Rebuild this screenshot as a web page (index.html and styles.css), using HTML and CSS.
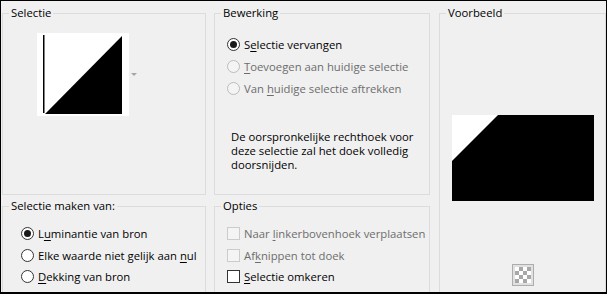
FILE: index.html
```html
<!DOCTYPE html>
<html lang="nl">
<head>
    <meta charset="UTF-8">
    <meta name="viewport" content="width=device-width, initial-scale=1.0">
    <title>Selectie uit masker</title>
    <link rel="stylesheet" href="styles.css">
</head>
<body>
    <div class="dialog">
        <fieldset class="group">
            <legend>Selectie</legend>
            <div class="thumb-row">
                <svg class="thumb" width="92" height="83" viewBox="0 0 92 83">
                    <rect width="92" height="83" fill="#fff"/>
                    <rect x="6" y="2" width="1.5" height="78" fill="#000"/>
                    <polygon points="8,81 85,3 85,81" fill="#000"/>
                </svg>
                <span class="drop-arrow"></span>
            </div>
        </fieldset>

        <fieldset class="group">
            <legend>Bewerking</legend>
            <div class="options options-edit">
                <div class="option"><span class="radio checked"></span><span>S<u>e</u>lectie vervangen</span></div>
                <div class="option disabled"><span class="radio"></span><span><u>T</u>oevoegen aan huidige selectie</span></div>
                <div class="option disabled"><span class="radio"></span><span>Van <u>h</u>uidige selectie aftrekken</span></div>
            </div>
            <p class="note">De oorspronkelijke rechthoek voor<br>deze selectie zal het doek volledig<br>doorsnijden.</p>
        </fieldset>

        <fieldset class="group group-preview">
            <legend>Voorbeeld</legend>
            <svg class="preview" width="142" height="86" viewBox="0 0 142 86">
                <rect width="142" height="86" fill="#000"/>
                <polygon points="0,0 46,0 0,46" fill="#fff"/>
            </svg>
            <button class="checker-btn" type="button"><span class="checker"></span></button>
        </fieldset>

        <fieldset class="group">
            <legend>Selectie maken van:</legend>
            <div class="options options-source">
                <div class="option"><span class="radio checked"></span><span>L<u>u</u>minantie van bron</span></div>
                <div class="option"><span class="radio"></span><span>Elke waarde niet gelijk aan <u>n</u>ul</span></div>
                <div class="option"><span class="radio"></span><span><u>D</u>ekking van bron</span></div>
            </div>
        </fieldset>

        <fieldset class="group">
            <legend>Opties</legend>
            <div class="options options-extra">
                <div class="option disabled"><span class="check"></span><span>Naar <u>l</u>inkerbovenhoek verplaatsen</span></div>
                <div class="option disabled"><span class="check"></span><span>Af<u>k</u>nippen tot doek</span></div>
                <div class="option"><span class="check"></span><span><u>S</u>electie omkeren</span></div>
            </div>
        </fieldset>
    </div>
</body>
</html>
```

FILE: styles.css
```css
body {
    margin: 0;
    font-family: "Open Sans", "Noto Sans", sans-serif;
    font-size: 11.3px;
    color: #000;
}
.dialog {
    box-sizing: border-box;
    width: 607px;
    height: 294px;
    border: 1px solid #000;
    border-bottom-width: 2px;
    background: #f0f0f0;
    overflow: hidden;
    display: grid;
    grid-template-columns: 204px 216px 168px;
    grid-template-rows: 189px 100px;
    column-gap: 8px;
    row-gap: 4px;
    padding: 5px 0 0 1px;
}
.group {
    margin: 0;
    padding: 0;
    min-width: 0;
    border: 1px solid #dcdcdc;
}
.group legend {
    margin-left: 6px;
    padding: 0 2px;
    line-height: 14px;
}
.group-preview {
    grid-column: 3;
    grid-row: 1 / 3;
    margin-left: 1px;
    height: 293px;
    display: flex;
    flex-direction: column;
    align-items: center;
}
.thumb-row {
    display: flex;
    align-items: center;
    margin: 13px 0 0 34px;
}
.thumb {
    display: block;
}
.drop-arrow {
    margin-left: 2px;
    border-left: 3px solid transparent;
    border-right: 3px solid transparent;
    border-top: 3px solid #a6a6a6;
}
.options-edit {
    padding: 13px 0 0 12px;
}
.options-source {
    padding: 10px 0 0 18px;
}
.options-extra {
    padding: 10px 0 0 12px;
}
.option {
    display: flex;
    align-items: center;
    gap: 4px;
    height: 22px;
    white-space: nowrap;
}
.options-source .option,
.options-extra .option {
    height: 21.5px;
}
.option u {
    text-underline-offset: 2px;
}
.disabled {
    color: #6d6d6d;
}
.radio {
    box-sizing: border-box;
    width: 13px;
    height: 13px;
    border: 1px solid #333;
    border-radius: 50%;
    background: #fff;
    display: inline-flex;
    align-items: center;
    justify-content: center;
    flex-shrink: 0;
}
.radio.checked::after {
    content: "";
    width: 7px;
    height: 7px;
    border-radius: 50%;
    background: #1a1a1a;
}
.disabled .radio {
    border-color: #bcbcbc;
    background: #f4f4f4;
}
.check {
    box-sizing: border-box;
    width: 13px;
    height: 13px;
    border: 1px solid #333;
    background: #fff;
    flex-shrink: 0;
}
.disabled .check {
    border-color: #cccccc;
    background: #f4f4f4;
}
.note {
    margin: 31px 0 0 16px;
    line-height: 14px;
}
.preview {
    display: block;
    margin-top: 95px;
}
.checker-btn {
    box-sizing: border-box;
    width: 22px;
    height: 22px;
    margin-top: 63px;
    padding: 0;
    border: 1px solid #adadad;
    background: #e1e1e1;
    display: flex;
    align-items: center;
    justify-content: center;
}
.checker {
    width: 16px;
    height: 16px;
    background-color: #fff;
    background-image:
        linear-gradient(45deg, #a8a8a8 25%, transparent 25%, transparent 75%, #a8a8a8 75%),
        linear-gradient(45deg, #a8a8a8 25%, transparent 25%, transparent 75%, #a8a8a8 75%);
    background-size: 8px 8px;
    background-position: 0 0, 4px 4px;
}
```
